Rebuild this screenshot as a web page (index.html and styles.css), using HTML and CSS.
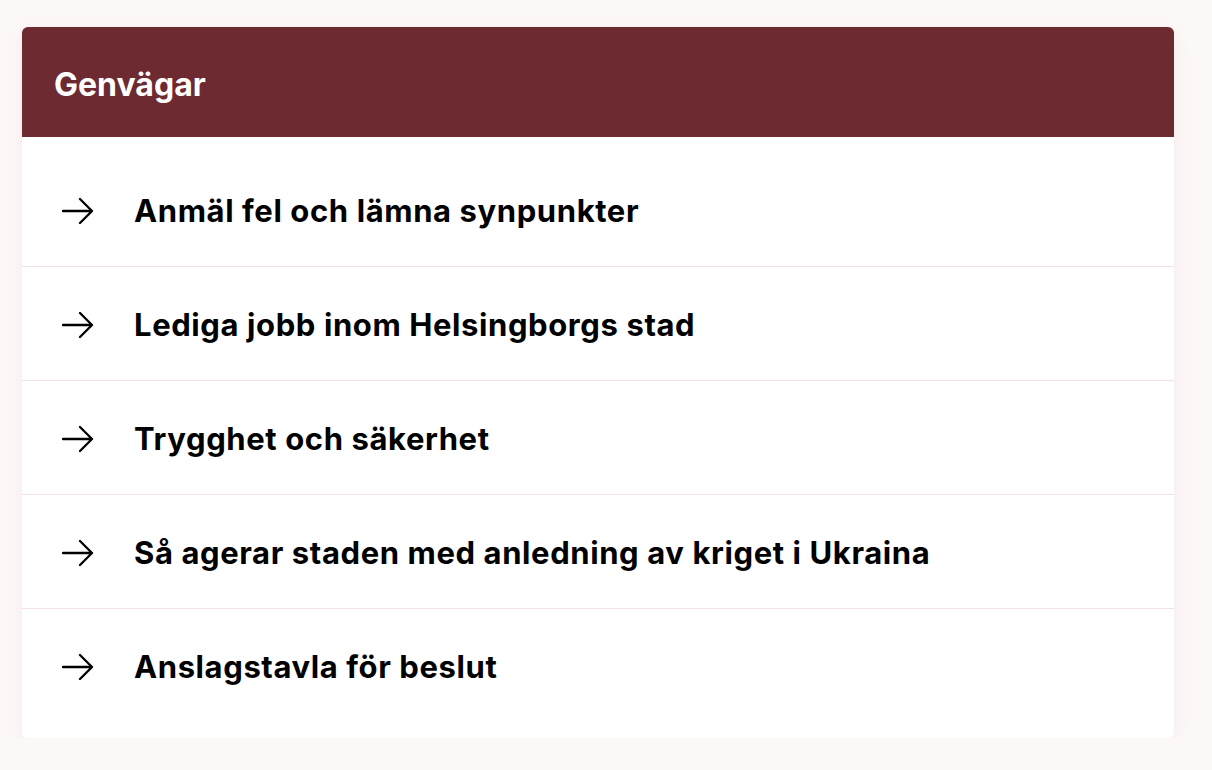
FILE: index.html
```html
<!DOCTYPE html>
<html lang="sv">
<head>
<meta charset="utf-8">
<title>Genvägar</title>
<link rel="stylesheet" href="styles.css">
</head>
<body>
<main class="page">
  <section class="card">
    <h2 class="card-header">Genvägar</h2>
    <ul class="links">
      <li class="link-row"><a href="#"><svg class="arrow" viewBox="0 0 32 28" aria-hidden="true"><path d="M1 14H30M18 2L30 14L18 26"/></svg><span>Anmäl fel och lämna synpunkter</span></a></li>
      <li class="link-row"><a href="#"><svg class="arrow" viewBox="0 0 32 28" aria-hidden="true"><path d="M1 14H30M18 2L30 14L18 26"/></svg><span>Lediga jobb inom Helsingborgs stad</span></a></li>
      <li class="link-row"><a href="#"><svg class="arrow" viewBox="0 0 32 28" aria-hidden="true"><path d="M1 14H30M18 2L30 14L18 26"/></svg><span>Trygghet och säkerhet</span></a></li>
      <li class="link-row"><a href="#"><svg class="arrow" viewBox="0 0 32 28" aria-hidden="true"><path d="M1 14H30M18 2L30 14L18 26"/></svg><span>Så agerar staden med anledning av kriget i Ukraina</span></a></li>
      <li class="link-row"><a href="#"><svg class="arrow" viewBox="0 0 32 28" aria-hidden="true"><path d="M1 14H30M18 2L30 14L18 26"/></svg><span>Anslagstavla för beslut</span></a></li>
    </ul>
  </section>
</main>
</body>
</html>
```
FILE: styles.css
```css
* { box-sizing: border-box; }
html, body { margin: 0; padding: 0; }
body {
  background: #fdf8f8;
  font-family: "Inter", "Liberation Sans", sans-serif;
  color: #000;
}
.page {
  padding: 27px 38px 0 22px;
}
.card {
  width: 1152px;
  background: #fff;
  border-radius: 6px;
  overflow: hidden;
  box-shadow: 0 4px 20px rgba(120, 40, 40, 0.06);
}
.card-header {
  margin: 0;
  height: 110px;
  display: flex;
  align-items: center;
  padding: 4px 0 0 32px;
  background: #6d2a31;
  color: #fff;
  font-size: 32px;
  font-weight: 700;
  letter-spacing: 0;
}
.links {
  list-style: none;
  margin: 0;
  padding: 16px 0 16px;
}
.link-row + .link-row {
  border-top: 1px solid #f3e1e6;
}
.link-row a {
  display: flex;
  align-items: center;
  gap: 40px;
  height: 113px;
  padding: 2px 0 0 40px;
  color: #000;
  text-decoration: none;
  font-size: 31px;
  font-weight: 700;
  letter-spacing: 0.6px;
}
.arrow {
  width: 32px;
  height: 28px;
  flex: none;
  fill: none;
  stroke: #000;
  stroke-width: 2.3;
  stroke-linecap: round;
  stroke-linejoin: round;
}
```
